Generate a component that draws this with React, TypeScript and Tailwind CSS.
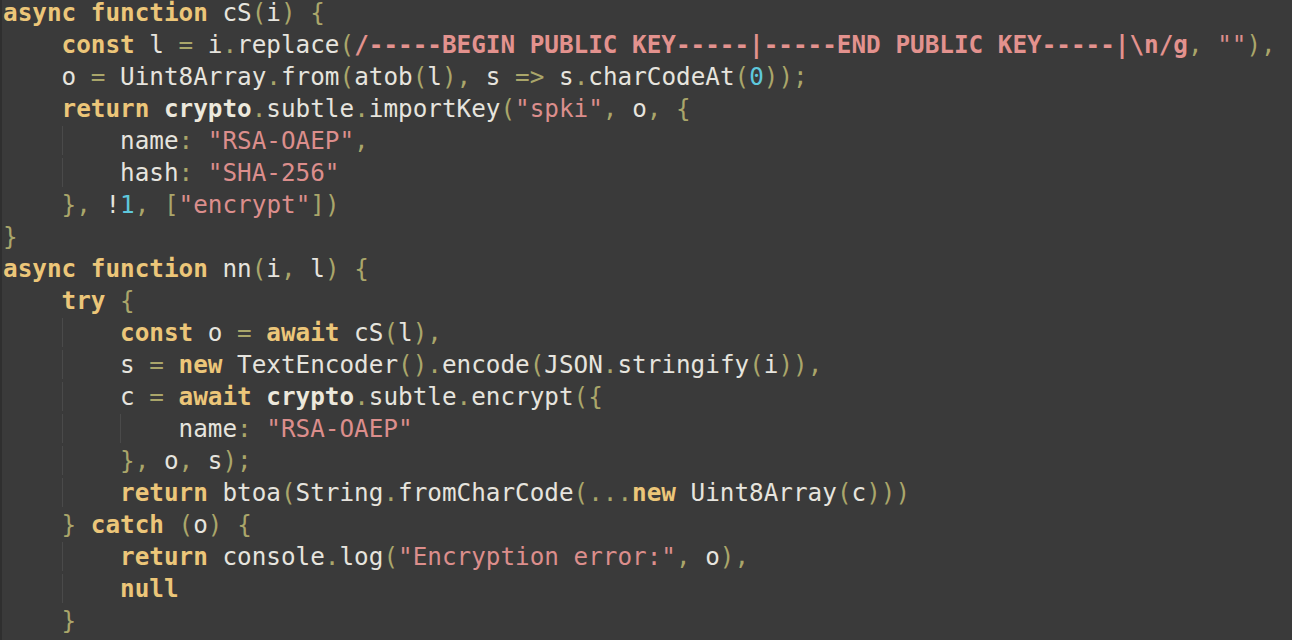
type Tok = [string, string];

// k keyword, w plain, p punctuation, s string, r regex, n number, b bold plain
const cls: Record<string, string> = {
  k: "text-[#ecc679] font-bold",
  w: "text-[#e6e4de]",
  p: "text-[#aaa66a]",
  s: "text-[#dc8e8c]",
  r: "text-[#e3928e] font-bold",
  n: "text-[#5ec8dc]",
  b: "text-[#ece8dc] font-bold",
};

const lines: { indent: number; toks: Tok[] }[] = [
  { indent: 0, toks: [["k", "async"], ["w", " "], ["k", "function"], ["w", " cS"], ["p", "("], ["w", "i"], ["p", ")"], ["w", " "], ["p", "{"]] },
  { indent: 1, toks: [["k", "const"], ["w", " l "], ["p", "="], ["w", " i"], ["p", "."], ["w", "replace"], ["p", "("], ["r", "/-----BEGIN PUBLIC KEY-----|-----END PUBLIC KEY-----|\\n/g"], ["p", ","], ["w", " "], ["s", '""'], ["p", "),"]] },
  { indent: 1, toks: [["w", "o "], ["p", "="], ["w", " Uint8Array"], ["p", "."], ["w", "from"], ["p", "("], ["w", "atob"], ["p", "("], ["w", "l"], ["p", "),"], ["w", " s "], ["p", "=>"], ["w", " s"], ["p", "."], ["w", "charCodeAt"], ["p", "("], ["n", "0"], ["p", "));"]] },
  { indent: 1, toks: [["k", "return"], ["w", " "], ["b", "crypto"], ["p", "."], ["w", "subtle"], ["p", "."], ["w", "importKey"], ["p", "("], ["s", '"spki"'], ["p", ","], ["w", " o"], ["p", ","], ["w", " "], ["p", "{"]] },
  { indent: 2, toks: [["w", "name"], ["p", ":"], ["w", " "], ["s", '"RSA-OAEP"'], ["p", ","]] },
  { indent: 2, toks: [["w", "hash"], ["p", ":"], ["w", " "], ["s", '"SHA-256"']] },
  { indent: 1, toks: [["p", "},"], ["w", " !"], ["n", "1"], ["p", ","], ["w", " "], ["p", "["], ["s", '"encrypt"'], ["p", "])"]] },
  { indent: 0, toks: [["p", "}"]] },
  { indent: 0, toks: [["k", "async"], ["w", " "], ["k", "function"], ["w", " nn"], ["p", "("], ["w", "i"], ["p", ","], ["w", " l"], ["p", ")"], ["w", " "], ["p", "{"]] },
  { indent: 1, toks: [["k", "try"], ["w", " "], ["p", "{"]] },
  { indent: 2, toks: [["k", "const"], ["w", " o "], ["p", "="], ["w", " "], ["k", "await"], ["w", " cS"], ["p", "("], ["w", "l"], ["p", "),"]] },
  { indent: 2, toks: [["w", "s "], ["p", "="], ["w", " "], ["k", "new"], ["w", " TextEncoder"], ["p", "()."], ["w", "encode"], ["p", "("], ["w", "JSON"], ["p", "."], ["w", "stringify"], ["p", "("], ["w", "i"], ["p", ")),"]] },
  { indent: 2, toks: [["w", "c "], ["p", "="], ["w", " "], ["k", "await"], ["w", " "], ["b", "crypto"], ["p", "."], ["w", "subtle"], ["p", "."], ["w", "encrypt"], ["p", "({"]] },
  { indent: 3, toks: [["w", "name"], ["p", ":"], ["w", " "], ["s", '"RSA-OAEP"']] },
  { indent: 2, toks: [["p", "},"], ["w", " o"], ["p", ","], ["w", " s"], ["p", ");"]] },
  { indent: 2, toks: [["k", "return"], ["w", " btoa"], ["p", "("], ["w", "String"], ["p", "."], ["w", "fromCharCode"], ["p", "(..."], ["k", "new"], ["w", " Uint8Array"], ["p", "("], ["w", "c"], ["p", ")))"]] },
  { indent: 1, toks: [["p", "}"], ["w", " "], ["k", "catch"], ["w", " "], ["p", "("], ["w", "o"], ["p", ")"], ["w", " "], ["p", "{"]] },
  { indent: 2, toks: [["k", "return"], ["w", " console"], ["p", "."], ["w", "log"], ["p", "("], ["s", '"Encryption error:"'], ["p", ","], ["w", " o"], ["p", "),"]] },
  { indent: 2, toks: [["k", "null"]] },
  { indent: 1, toks: [["p", "}"]] },
];

const Line = ({ indent, toks }: { indent: number; toks: Tok[] }) => (
  <div className="h-[32px] leading-[32px] whitespace-pre">
    {Array.from({ length: indent }).map((_, i) => (
      <span key={i} className={i > 0 ? "shadow-[inset_1px_0_0_#4a4a4a]" : ""}>
        {"    "}
      </span>
    ))}
    {toks.map(([c, t], i) => (
      <span key={i} className={cls[c]}>
        {t}
      </span>
    ))}
  </div>
);

export default function App() {
  return (
    <div className="w-[1292px] h-[640px] overflow-hidden bg-[#3a3a3a] border-l-2 border-[#2f2f2f]">
      <div
        className="-mt-[3px] pl-[1px] text-[24.3px]"
        style={{ fontFamily: "'DejaVu Sans Mono', 'Liberation Mono', monospace" }}
      >
        {lines.map((l, i) => (
          <Line key={i} indent={l.indent} toks={l.toks} />
        ))}
      </div>
    </div>
  );
}
